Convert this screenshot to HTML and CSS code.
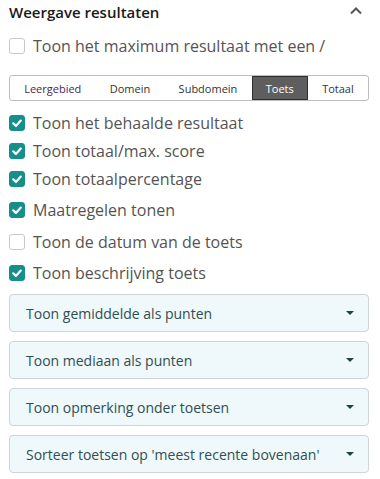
FILE: index.html
```
<!DOCTYPE html>
<html lang="nl">
<head>
<meta charset="utf-8">
<link rel="stylesheet" href="styles.css">
</head>
<body>
<div class="panel">
  <div class="header">
    <span class="title">Weergave resultaten</span>
    <svg class="chev" width="14" height="10" viewBox="0 0 14 10"><path d="M2 7.5 L7 2.5 L12 7.5" fill="none" stroke="#555" stroke-width="2"/></svg>
  </div>
  <label class="row r-first"><span class="cb"></span><span class="lbl">Toon het maximum resultaat met een /</span></label>
  <div class="seg">
    <span class="seg-item visited">Leergebied</span>
    <span class="seg-item">Domein</span>
    <span class="seg-item">Subdomein</span>
    <span class="seg-item active">Toets</span>
    <span class="seg-item">Totaal</span>
  </div>
  <div class="group g1">
    <label class="row"><span class="cb on"><svg width="16" height="16" viewBox="0 0 16 16"><path d="M4.2 8.3 L6.9 10.9 L11.8 5.6" fill="none" stroke="#fff" stroke-width="2.2" stroke-linecap="round" stroke-linejoin="round"/></svg></span><span class="lbl">Toon het behaalde resultaat</span></label>
    <label class="row"><span class="cb on"><svg width="16" height="16" viewBox="0 0 16 16"><path d="M4.2 8.3 L6.9 10.9 L11.8 5.6" fill="none" stroke="#fff" stroke-width="2.2" stroke-linecap="round" stroke-linejoin="round"/></svg></span><span class="lbl">Toon totaal/max. score</span></label>
    <label class="row"><span class="cb on"><svg width="16" height="16" viewBox="0 0 16 16"><path d="M4.2 8.3 L6.9 10.9 L11.8 5.6" fill="none" stroke="#fff" stroke-width="2.2" stroke-linecap="round" stroke-linejoin="round"/></svg></span><span class="lbl">Toon totaalpercentage</span></label>
  </div>
  <div class="group g2">
    <label class="row"><span class="cb on"><svg width="16" height="16" viewBox="0 0 16 16"><path d="M4.2 8.3 L6.9 10.9 L11.8 5.6" fill="none" stroke="#fff" stroke-width="2.2" stroke-linecap="round" stroke-linejoin="round"/></svg></span><span class="lbl">Maatregelen tonen</span></label>
    <label class="row"><span class="cb"></span><span class="lbl">Toon de datum van de toets</span></label>
    <label class="row"><span class="cb on"><svg width="16" height="16" viewBox="0 0 16 16"><path d="M4.2 8.3 L6.9 10.9 L11.8 5.6" fill="none" stroke="#fff" stroke-width="2.2" stroke-linecap="round" stroke-linejoin="round"/></svg></span><span class="lbl">Toon beschrijving toets</span></label>
  </div>
  <div class="drops">
    <div class="drop"><span>Toon gemiddelde als punten</span><span class="caret"></span></div>
    <div class="drop"><span>Toon mediaan als punten</span><span class="caret"></span></div>
    <div class="drop"><span>Toon opmerking onder toetsen</span><span class="caret"></span></div>
    <div class="drop"><span>Sorteer toetsen op 'meest recente bovenaan'</span><span class="caret"></span></div>
  </div>
</div>
</body>
</html>
```
FILE: styles.css
```
html, body { margin: 0; padding: 0; background: #fff; }
body { font-family: "Open Sans", "Noto Sans", sans-serif; }
.panel { width: 360px; padding: 0 11px 0 9px; }
.header { display: flex; align-items: center; justify-content: space-between; height: 24px; }
.title { font-size: 15px; font-weight: 600; color: #1a1a1a; }
.chev { margin-right: 6px; margin-top: -2px; }
.row { display: flex; align-items: center; height: 28px; gap: 8px; cursor: pointer; }
.r-first { margin-top: 8px; }
.cb { width: 16px; height: 16px; box-sizing: border-box; border: 1px solid #c8c8c8; border-radius: 3px; background: #fff; display: flex; flex: none; }
.cb.on { background: #168f8c; border-color: #168f8c; }
.cb.on svg { margin: -1px; }
.lbl { font-size: 16px; color: #545454; white-space: nowrap; }
.seg { display: flex; margin-top: 15px; height: 26px; box-sizing: border-box; border: 1px solid #bdbdbd; border-radius: 3px; overflow: hidden; }
.seg-item { flex: 1 1 auto; display: flex; align-items: center; justify-content: center; font-size: 11px; color: #333; }
.seg-item.visited { color: #4a2750; }
.seg-item.active { background: #5e5e5e; color: #fff; outline: 1px solid #2e2e2e; outline-offset: -1px; }
.g1 { margin-top: 8px; }
.g2 { margin-top: 3px; display: flex; flex-direction: column; gap: 3.5px; }
.drops { margin-top: 7px; display: flex; flex-direction: column; gap: 9px; }
.drop { height: 38px; box-sizing: border-box; border: 1px solid #cfd4d6; border-radius: 4px; background: #eff8fa; display: flex; align-items: center; justify-content: space-between; padding: 0 14px 0 16px; font-size: 14px; color: #2f4f52; }
.caret { width: 0; height: 0; border-left: 4px solid transparent; border-right: 4px solid transparent; border-top: 4px solid #1e4447; }
```
